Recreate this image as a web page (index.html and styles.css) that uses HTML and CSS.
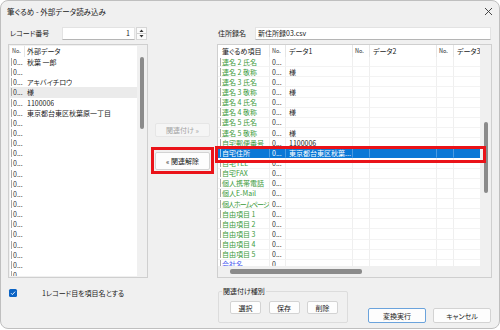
FILE: index.html
```html
<!DOCTYPE html>
<html lang="ja">
<head>
<meta charset="utf-8">
<title>筆ぐるめ - 外部データ読み込み</title>
<link rel="stylesheet" href="styles.css">
</head>
<body>
<div class="win">
  <div class="titlebar">
    <span class="title">筆ぐるめ - 外部データ読み込み</span>
    <svg class="close" width="9" height="9" viewBox="0 0 9 9"><path d="M1 1L8 8M8 1L1 8" stroke="#333" stroke-width="0.9" fill="none"/></svg>
  </div>

  <div class="main">
    <div class="pane pane-left">
      <div class="fieldrow">
        <span class="lbl lbl-rec">レコード番号</span>
        <div class="spin-input">1</div>
        <div class="spin-btn">
          <svg width="11" height="13" viewBox="0 0 11 13"><path d="M3.5 5L5.5 2.5L7.5 5Z" fill="#333"/><path d="M3.5 8L5.5 10.5L7.5 8Z" fill="#333"/><path d="M1 6.5H10" stroke="#d0d0d0" stroke-width="1"/></svg>
        </div>
      </div>
      <div class="list">
        <div class="list-body">
          <div class="lrow lhead"><div class="lc-no hcell">No.</div><div class="lc-data">外部データ</div></div>
          <div class="lrow"><div class="lc-no"><span class="mk"></span>0...</div><div class="lc-data">秋葉 一郎</div></div>
          <div class="lrow"><div class="lc-no"><span class="mk"></span>0...</div><div class="lc-data"></div></div>
          <div class="lrow"><div class="lc-no"><span class="mk"></span>0...</div><div class="lc-data">アキバイチロウ</div></div>
          <div class="lrow lsel"><div class="lc-no"><span class="mk"></span>0...</div><div class="lc-data">様</div></div>
          <div class="lrow"><div class="lc-no"><span class="mk"></span>0...</div><div class="lc-data">1100006</div></div>
          <div class="lrow"><div class="lc-no"><span class="mk"></span>0...</div><div class="lc-data">東京都台東区秋葉原一丁目</div></div>
          <div class="lrow"><div class="lc-no"><span class="mk"></span>0...</div><div class="lc-data"></div></div>
          <div class="lrow"><div class="lc-no"><span class="mk"></span>0...</div><div class="lc-data"></div></div>
          <div class="lrow"><div class="lc-no"><span class="mk"></span>0...</div><div class="lc-data"></div></div>
          <div class="lrow"><div class="lc-no"><span class="mk"></span>0...</div><div class="lc-data"></div></div>
          <div class="lrow"><div class="lc-no"><span class="mk"></span>0...</div><div class="lc-data"></div></div>
          <div class="lrow"><div class="lc-no"><span class="mk"></span>0...</div><div class="lc-data"></div></div>
          <div class="lrow"><div class="lc-no"><span class="mk"></span>0...</div><div class="lc-data"></div></div>
          <div class="lrow"><div class="lc-no"><span class="mk"></span>0...</div><div class="lc-data"></div></div>
          <div class="lrow"><div class="lc-no"><span class="mk"></span>0...</div><div class="lc-data"></div></div>
          <div class="lrow"><div class="lc-no"><span class="mk"></span>0...</div><div class="lc-data"></div></div>
          <div class="lrow"><div class="lc-no"><span class="mk"></span>0...</div><div class="lc-data"></div></div>
          <div class="lrow"><div class="lc-no"><span class="mk"></span>0...</div><div class="lc-data"></div></div>
          <div class="lrow"><div class="lc-no"><span class="mk"></span>0...</div><div class="lc-data"></div></div>
          <div class="lrow"><div class="lc-no"><span class="mk"></span>0...</div><div class="lc-data"></div></div>
          <div class="lrow"><div class="lc-no"><span class="mk"></span>0...</div><div class="lc-data"></div></div>
          <div class="lrow"><div class="lc-no"><span class="mk"></span>0...</div><div class="lc-data"></div></div>
        </div>
        <div class="vscroll"><div class="thumb-v thumb-left"></div></div>
      </div>
    </div>

    <div class="mid">
      <div class="btn btn-mid btn-disabled">関連付け »</div>
      <div class="btn btn-mid btn-unlink">« 関連解除</div>
    </div>

    <div class="pane pane-right">
      <div class="fieldrow">
        <span class="lbl lbl-name">住所録名</span>
        <div class="text-input">新住所録03.csv</div>
      </div>
      <div class="grid">
        <div class="grid-top">
          <div class="grid-body">
            <div class="gr ghead">
              <div class="gc c1">筆ぐるめ項目</div><div class="gc c2 small">No.</div><div class="gc c3">データ1</div><div class="gc c4 small">No.</div><div class="gc c5">データ2</div><div class="gc c6 small">No.</div><div class="gc c7">データ3</div>
            </div>
            <div class="gr"><div class="gc c1 g"><span class="mk"></span>連名 2 氏名</div><div class="gc c2">0...</div><div class="gc c3"></div><div class="gc c4"></div><div class="gc c5"></div><div class="gc c6"></div><div class="gc c7"></div></div>
            <div class="gr"><div class="gc c1 g"><span class="mk"></span>連名 2 敬称</div><div class="gc c2">0...</div><div class="gc c3">様</div><div class="gc c4"></div><div class="gc c5"></div><div class="gc c6"></div><div class="gc c7"></div></div>
            <div class="gr"><div class="gc c1 g"><span class="mk"></span>連名 3 氏名</div><div class="gc c2">0...</div><div class="gc c3"></div><div class="gc c4"></div><div class="gc c5"></div><div class="gc c6"></div><div class="gc c7"></div></div>
            <div class="gr"><div class="gc c1 g"><span class="mk"></span>連名 3 敬称</div><div class="gc c2">0...</div><div class="gc c3">様</div><div class="gc c4"></div><div class="gc c5"></div><div class="gc c6"></div><div class="gc c7"></div></div>
            <div class="gr"><div class="gc c1 g"><span class="mk"></span>連名 4 氏名</div><div class="gc c2">0...</div><div class="gc c3"></div><div class="gc c4"></div><div class="gc c5"></div><div class="gc c6"></div><div class="gc c7"></div></div>
            <div class="gr"><div class="gc c1 g"><span class="mk"></span>連名 4 敬称</div><div class="gc c2">0...</div><div class="gc c3">様</div><div class="gc c4"></div><div class="gc c5"></div><div class="gc c6"></div><div class="gc c7"></div></div>
            <div class="gr"><div class="gc c1 g"><span class="mk"></span>連名 5 氏名</div><div class="gc c2">0...</div><div class="gc c3"></div><div class="gc c4"></div><div class="gc c5"></div><div class="gc c6"></div><div class="gc c7"></div></div>
            <div class="gr"><div class="gc c1 g"><span class="mk"></span>連名 5 敬称</div><div class="gc c2">0...</div><div class="gc c3">様</div><div class="gc c4"></div><div class="gc c5"></div><div class="gc c6"></div><div class="gc c7"></div></div>
            <div class="gr"><div class="gc c1 g"><span class="mk"></span>自宅郵便番号</div><div class="gc c2">0...</div><div class="gc c3">1100006</div><div class="gc c4"></div><div class="gc c5"></div><div class="gc c6"></div><div class="gc c7"></div></div>
            <div class="gr gsel"><div class="gc c1"><span class="mk"></span>自宅住所</div><div class="gc c2">0...</div><div class="gc c3">東京都台東区秋葉...</div><div class="gc c4"></div><div class="gc c5"></div><div class="gc c6"></div><div class="gc c7"></div></div>
            <div class="gr"><div class="gc c1 g"><span class="mk"></span>自宅TEL</div><div class="gc c2">0...</div><div class="gc c3"></div><div class="gc c4"></div><div class="gc c5"></div><div class="gc c6"></div><div class="gc c7"></div></div>
            <div class="gr"><div class="gc c1 g"><span class="mk"></span>自宅FAX</div><div class="gc c2">0...</div><div class="gc c3"></div><div class="gc c4"></div><div class="gc c5"></div><div class="gc c6"></div><div class="gc c7"></div></div>
            <div class="gr"><div class="gc c1 g"><span class="mk"></span>個人携帯電話</div><div class="gc c2">0...</div><div class="gc c3"></div><div class="gc c4"></div><div class="gc c5"></div><div class="gc c6"></div><div class="gc c7"></div></div>
            <div class="gr"><div class="gc c1 g"><span class="mk"></span>個人E-Mail</div><div class="gc c2">0...</div><div class="gc c3"></div><div class="gc c4"></div><div class="gc c5"></div><div class="gc c6"></div><div class="gc c7"></div></div>
            <div class="gr"><div class="gc c1 g tight"><span class="mk"></span>個人ホームページ</div><div class="gc c2">0...</div><div class="gc c3"></div><div class="gc c4"></div><div class="gc c5"></div><div class="gc c6"></div><div class="gc c7"></div></div>
            <div class="gr"><div class="gc c1 g"><span class="mk"></span>自由項目 1</div><div class="gc c2">0...</div><div class="gc c3"></div><div class="gc c4"></div><div class="gc c5"></div><div class="gc c6"></div><div class="gc c7"></div></div>
            <div class="gr"><div class="gc c1 g"><span class="mk"></span>自由項目 2</div><div class="gc c2">0...</div><div class="gc c3"></div><div class="gc c4"></div><div class="gc c5"></div><div class="gc c6"></div><div class="gc c7"></div></div>
            <div class="gr"><div class="gc c1 g"><span class="mk"></span>自由項目 3</div><div class="gc c2">0...</div><div class="gc c3"></div><div class="gc c4"></div><div class="gc c5"></div><div class="gc c6"></div><div class="gc c7"></div></div>
            <div class="gr"><div class="gc c1 g"><span class="mk"></span>自由項目 4</div><div class="gc c2">0...</div><div class="gc c3"></div><div class="gc c4"></div><div class="gc c5"></div><div class="gc c6"></div><div class="gc c7"></div></div>
            <div class="gr"><div class="gc c1 g"><span class="mk"></span>自由項目 5</div><div class="gc c2">0...</div><div class="gc c3"></div><div class="gc c4"></div><div class="gc c5"></div><div class="gc c6"></div><div class="gc c7"></div></div>
            <div class="gr"><div class="gc c1 b"><span class="mk"></span>会社名</div><div class="gc c2">0...</div><div class="gc c3"></div><div class="gc c4"></div><div class="gc c5"></div><div class="gc c6"></div><div class="gc c7"></div></div>
          </div>
          <div class="vscroll vscroll-r"><div class="thumb-v thumb-right"></div></div>
        </div>
        <div class="hscroll"><div class="thumb-h"></div></div>
      </div>
    </div>
  </div>

  <div class="bottom">
    <div class="chk-area">
      <span class="chk">
        <svg width="8" height="8" viewBox="0 0 8 8"><path d="M2 4.2L3.4 5.6L6.1 2.6" stroke="#fff" stroke-width="0.9" fill="none"/></svg>
      </span>
      <span class="chk-label">1レコード目を項目名とする</span>
    </div>
    <fieldset class="group">
      <legend>関連付け種別</legend>
      <div class="group-btns">
        <div class="btn btn-sm">選択</div>
        <div class="btn btn-sm">保存</div>
        <div class="btn btn-sm">削除</div>
      </div>
    </fieldset>
    <div class="actions">
      <div class="btn btn-act btn-default">変換実行</div>
      <div class="btn btn-act">キャンセル</div>
    </div>
  </div>

  <div class="mark mark-btn"></div>
  <div class="mark mark-row"></div>
</div>
</body>
</html>
```

FILE: styles.css
```css
* { box-sizing: border-box; }
html, body { margin: 0; padding: 0; background: #ffffff; }
body {
  font-family: "Noto Sans CJK JP", "Noto Sans", sans-serif;
  font-size: 7px;
  color: #1c1c1c;
  font-feature-settings: "palt";
}

.win {
  position: relative;
  width: 500px;
  height: 329px;
  background: #f0f0f0;
  border: 1px solid #bfbfbf;
  border-radius: 8px;
  overflow: hidden;
  display: flex;
  flex-direction: column;
}

.titlebar {
  height: 21px;
  flex: none;
  display: flex;
  align-items: center;
  justify-content: space-between;
  padding: 0 6px 0 6px;
}
.title { font-size: 7.5px; color: #1a1a1a; }
.close { display: block; margin-top: -1px; }

.main {
  display: flex;
  padding: 4px 0 0 7px;
  height: 257px;
  flex: none;
}

.pane { display: flex; flex-direction: column; gap: 4px; }
.pane-left { width: 140px; }
.pane-right { width: 275px; }

.fieldrow { height: 14px; display: flex; align-items: center; }
.lbl { white-space: nowrap; }
.lbl-rec { width: 54px; padding-left: 2px; }
.lbl-name { width: 38px; padding-left: 1px; }

.spin-input {
  width: 73px;
  height: 13px;
  background: #fff;
  border: 1px solid #e3e3e3;
  border-bottom-color: #b5b5b5;
  text-align: right;
  padding-right: 4px;
  line-height: 11px;
}
.spin-btn {
  width: 11px;
  height: 13px;
  margin-left: 1px;
  background: #fbfbfb;
  border: 1px solid #d6d6d6;
  display: flex;
}
.spin-btn svg { margin: -1px; }

.text-input {
  width: 236px;
  height: 13px;
  background: #fff;
  border: 1px solid #e3e3e3;
  border-bottom-color: #b5b5b5;
  padding-left: 2px;
  line-height: 11px;
}

/* left list */
.list {
  height: 234px;
  border: 1px solid #cfcfcf;
  background: #f0f0f0;
  display: flex;
  padding: 1px 0 1px 1px;
}
.list-body { flex: 1; background: #fff; overflow: hidden; }
.lrow { display: flex; height: 10.15px; line-height: 10px; white-space: nowrap; }
.lhead { height: 11px; line-height: 11px; }
.lsel { background: #ebebeb; }
.lc-no {
  width: 15px;
  padding-left: 1px;
  display: flex;
  align-items: center;
  overflow: hidden;
  color: #333;
}
.lc-data { padding-left: 2px; overflow: hidden; }
.hcell { font-size: 5.5px; border-right: 1px solid #e6e6e6; padding-left: 2px; }
.mk {
  display: inline-block;
  width: 1px;
  height: 8px;
  background: #a8a8a8;
  margin-right: 1px;
  flex: none;
}

.vscroll { width: 10px; display: flex; justify-content: center; flex: none; }
.vscroll-r { width: 11px; }
.thumb-v { width: 4px; background: #8b8b8b; border-radius: 2px; }
.thumb-left { height: 72px; margin-top: 11px; }
.thumb-right { height: 71px; margin-top: 77px; }

/* middle */
.mid {
  width: 69px;
  display: flex;
  flex-direction: column;
  align-items: center;
  padding-top: 97px;
}
.btn {
  display: flex;
  align-items: center;
  justify-content: center;
  background: #fdfdfd;
  border: 1px solid #d3d3d3;
  border-radius: 2px;
  white-space: nowrap;
  color: #1a1a1a;
}
.btn-mid { width: 55px; }
.btn-disabled { height: 14px; background: #f5f5f5; border-color: #e6e6e6; color: #a3a3a3; }
.btn-unlink { height: 18px; margin-top: 15px; }

/* right grid */
.grid {
  height: 234px;
  border: 1px solid #cfcfcf;
  background: #f0f0f0;
  display: flex;
  flex-direction: column;
}
.grid-top { display: flex; flex: 1; min-height: 0; }
.grid-body { width: 262px; background: #fff; overflow: hidden; }
.hscroll { height: 11px; flex: none; display: flex; align-items: center; }
.thumb-h { width: 132px; height: 5px; margin-left: 12px; background: #8b8b8b; border-radius: 2px; }

.gr { display: flex; height: 10.15px; line-height: 10px; white-space: nowrap; }
.ghead { height: 12px; line-height: 12px; }
.gc {
  flex: none;
  overflow: hidden;
  border-right: 1px solid #efefef;
  border-bottom: 1px solid #f3f3f3;
  display: flex;
  align-items: center;
}
.ghead .gc { border-bottom: none; border-right-color: #e6e6e6; }
.c1 { width: 52px; padding-left: 2px; }
.c2 { width: 16px; padding-left: 2px; color: #333; }
.c3 { width: 67px; padding-left: 3px; }
.c4 { width: 17px; padding-left: 2px; }
.c5 { width: 67px; padding-left: 3px; }
.c6 { width: 17px; padding-left: 2px; }
.c7 { width: 26px; padding-left: 3px; border-right: none; }
.ghead .c1 { padding-left: 4px; }
.small { font-size: 5.5px; }
.g { color: #3a9a3a; }
.b { color: #4a5cf0; }
.tight { letter-spacing: -1px; }

.gsel { background: #0a78d6; color: #fff; }
.gsel .gc { color: #fff; border-right-color: #4a9be2; border-bottom-color: #0a78d6; }
.gsel .mk { background: #9cc6ee; }

/* bottom */
.bottom { display: flex; padding-left: 8px; flex: 1; }
.chk-area { width: 209px; padding-top: 10px; display: flex; align-items: flex-start; }
.chk {
  width: 8px;
  height: 8px;
  background: #0b63c4;
  border-radius: 1.5px;
  display: flex;
}
.chk-label { margin-left: 25px; line-height: 8px; margin-top: 0px; }

.group {
  width: 130px;
  height: 37px;
  margin: 7px 0 0 0;
  padding: 0 0 0 11px;
  border: 1px solid #dcdcdc;
  border-radius: 2px;
}
.group legend {
  padding: 0 1px;
  margin-left: -8px;
  line-height: 10px;
}
.group-btns { display: flex; gap: 7.5px; margin-top: 5px; }
.btn-sm { width: 31px; height: 13px; }

.actions { margin-left: 20px; display: flex; gap: 7px; padding-top: 29px; }
.btn-act { width: 58px; height: 15px; }
.btn-default { border-color: #6ba3dc; }

/* red annotation boxes */
.mark { position: absolute; border: 3px solid #ea1319; pointer-events: none; }
.mark-btn { left: 150px; top: 146px; width: 63px; height: 27px; }
.mark-row { left: 214px; top: 145px; width: 271px; height: 17px; }
```
